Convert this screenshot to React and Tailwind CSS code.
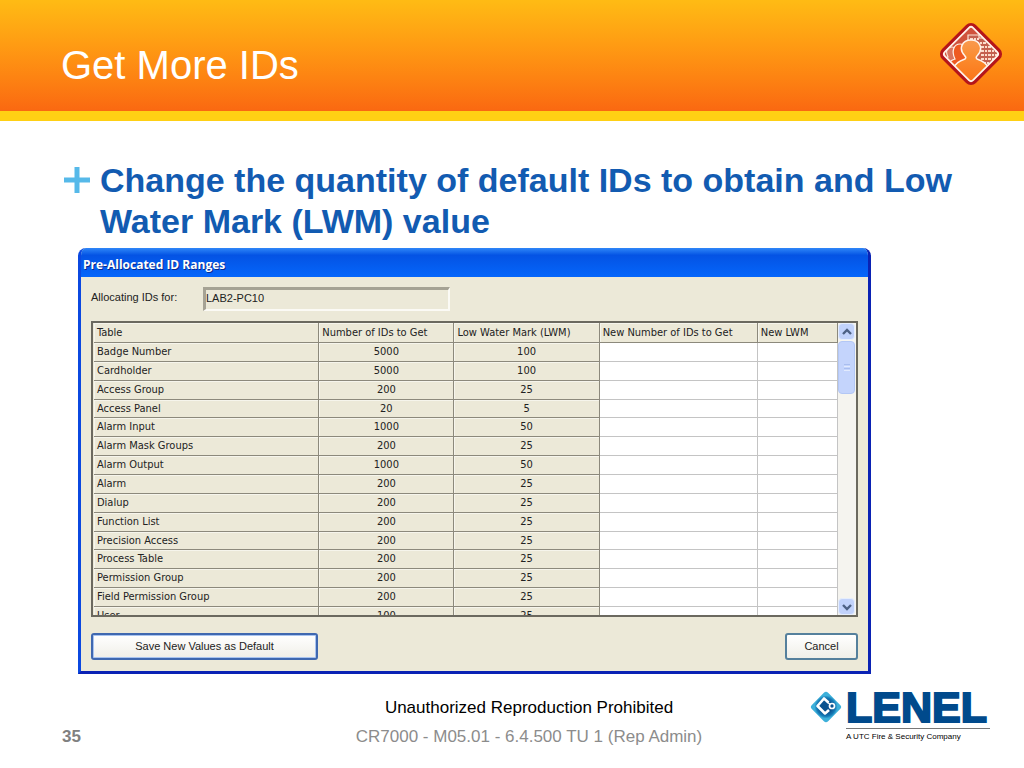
const columns = [
  { label: "Table", width: "w-[225px]" },
  { label: "Number of IDs to Get", width: "w-[135px]" },
  { label: "Low Water Mark (LWM)", width: "w-[145px]" },
  { label: "New Number of IDs to Get", width: "w-[158px]" },
  { label: "New LWM", width: "w-[80px]" },
];

const rows = [
  ["Badge Number", 5000, 100],
  ["Cardholder", 5000, 100],
  ["Access Group", 200, 25],
  ["Access Panel", 20, 5],
  ["Alarm Input", 1000, 50],
  ["Alarm Mask Groups", 200, 25],
  ["Alarm Output", 1000, 50],
  ["Alarm", 200, 25],
  ["Dialup", 200, 25],
  ["Function List", 200, 25],
  ["Precision Access", 200, 25],
  ["Process Table", 200, 25],
  ["Permission Group", 200, 25],
  ["Field Permission Group", 200, 25],
  ["User", 100, 25],
];

function BadgeIcon() {
  return (
    <svg viewBox="0 0 64 64" className="h-16 w-16" aria-hidden="true">
      <defs>
        <clipPath id="badge-clip">
          <rect x="12" y="12" width="40" height="40" rx="3" transform="rotate(45 32 32)" />
        </clipPath>
        <linearGradient id="badge-person" x1="0" y1="0" x2="0" y2="1">
          <stop offset="0" stopColor="#f99a50" />
          <stop offset="0.4" stopColor="#fb8a2c" />
          <stop offset="1" stopColor="#fb6d12" />
        </linearGradient>
      </defs>
      <rect x="8" y="8" width="48" height="48" rx="7" transform="rotate(45 32 32)" fill="#b5151a" />
      <g clipPath="url(#badge-clip)">
        <rect width="64" height="64" fill="#d0523c" />
        <path d="M29 36V13h11v3h8v4h16v44H29z" fill="#c4604f" stroke="#fbe3d4" strokeWidth="1.2" />
        <path
          d="M31 17h9M37 21h11M42 25h11M42 29h15M42 33h17M42 37h14M44 41h10M46 45h7"
          stroke="#fbdccb"
          strokeWidth="2"
          strokeDasharray="3 1 2 1"
        />
        <path
          d="M2 42c1-5 4-6 7-7-3-6-1-10 4-10 4 0 5 4 4 8l4 6v9H2z"
          fill="#d97560"
          stroke="#fbe3d4"
          strokeWidth="1.2"
        />
        <path
          d="M8 46c1-6 4-8 8-9-4-8-1-15 5-15 5 0 7 5 5 12l6 5v12H8z"
          fill="#ee5a22"
          stroke="#fff3ea"
          strokeWidth="1.2"
        />
        <path
          d="M15 46c1-5 5-7 11-9 1-1 1-2 0-3-7-7-3-16 6-16s13 9 6 16c-1 1-1 2 0 3 6 2 10 4 11 9v20H15z"
          fill="url(#badge-person)"
          stroke="#fff3ea"
          strokeWidth="1.5"
        />
      </g>
      <rect
        x="12"
        y="12"
        width="40"
        height="40"
        rx="3"
        transform="rotate(45 32 32)"
        fill="none"
        stroke="#fff3ea"
        strokeWidth="1.8"
      />
    </svg>
  );
}

function LenelMark() {
  return (
    <svg viewBox="0 0 32 34" className="h-[34px] w-8 shrink-0" aria-hidden="true">
      <defs>
        <radialGradient id="lenel-mark">
          <stop offset="0.5" stopColor="#0a528f" />
          <stop offset="0.8" stopColor="#1478b4" />
          <stop offset="1" stopColor="#3db0da" />
        </radialGradient>
      </defs>
      <rect x="4.5" y="5.5" width="23" height="23" rx="3" transform="rotate(45 16 17)" fill="url(#lenel-mark)" />
      <path
        d="M18.5 12.5L14 8.5L7.5 16L15 23.5L19 20"
        fill="none"
        stroke="#fff"
        strokeWidth="2.6"
        strokeLinejoin="round"
      />
      <path d="M17 12l4 3" stroke="#fff" strokeWidth="1.5" />
      <circle cx="22" cy="16" r="2.5" fill="#0a528f" stroke="#fff" strokeWidth="1.7" />
    </svg>
  );
}

function ScrollButton({ label, path }) {
  return (
    <button
      type="button"
      aria-label={label}
      className="flex h-[17px] w-full items-center justify-center rounded-sm border border-[#e6eefc] bg-[#c1d2fb]"
    >
      <svg viewBox="0 0 10 8" className="h-2 w-2.5">
        <path d={path} fill="none" stroke="#4d6185" strokeWidth="2.4" />
      </svg>
    </button>
  );
}

function ScrollBar() {
  return (
    <div className="flex w-[18px] shrink-0 flex-col bg-[#f5f4ef] pr-px">
      <ScrollButton label="Scroll up" path="M1 6l4-4 4 4" />
      <div className="mt-px flex h-[53px] flex-col items-center justify-center gap-px rounded-sm border border-[#b3c7f5] bg-[#c4d4fc]">
        <span className="h-px w-1.5 bg-[#a9beef]" />
        <span className="h-px w-1.5 bg-[#e2eafd]" />
        <span className="h-px w-1.5 bg-[#a9beef]" />
        <span className="h-px w-1.5 bg-[#e2eafd]" />
      </div>
      <div className="flex-1" />
      <ScrollButton label="Scroll down" path="M1 2l4 4 4-4" />
    </div>
  );
}

function IdTable() {
  const grey = "border-r border-b border-[#8c897c] p-0 shadow-[inset_1px_1px_0_#f6f5ec]";
  const white = "border-r border-b border-[#c4c4c4] bg-white p-0";

  return (
    <div className="mt-2.5 flex h-[296px] border-2 border-[#6b695f] pl-px">
      <div className="min-w-0 flex-1 overflow-hidden">
        <table className="h-[303px] w-full table-fixed border-separate border-spacing-0 text-[11px] leading-4 text-[#222]">
          <thead>
            <tr className="h-5">
              {columns.map((col) => (
                <th key={col.label} className={`${grey} ${col.width} h-5 pl-[3px] text-left font-normal whitespace-nowrap`}>
                  {col.label}
                </th>
              ))}
            </tr>
          </thead>
          <tbody>
            {rows.map(([name, ids, lwm]) => (
              <tr key={name}>
                <td className={`${grey} pl-[3px]`}>{name}</td>
                <td className={`${grey} text-center`}>{ids}</td>
                <td className={`${grey} text-center`}>{lwm}</td>
                <td className={white} />
                <td className={white} />
              </tr>
            ))}
          </tbody>
        </table>
      </div>
      <ScrollBar />
    </div>
  );
}

function RangesDialog() {
  return (
    <section className="mt-1.5 mr-[153px] ml-[78px] overflow-hidden rounded-t-lg border-r-[3px] border-b-[3px] border-l-[3px] border-[#0a22b4] border-l-[#0b48e0] bg-[#ece9d8] font-['DejaVu_Sans_Condensed','DejaVu_Sans',sans-serif] text-[11px] text-[#222]">
      <h3 className="flex h-[29px] items-center bg-linear-to-b from-[#2f86f8] via-[#0453e4] via-25% to-[#0566fb] pt-1 pl-0.5 font-['Open_Sans',sans-serif] text-xs font-bold text-white [text-shadow:1px_1px_0_#0a2a8c]">
        Pre-Allocated ID Ranges
      </h3>
      <div className="px-2.5 pt-2.5 pb-[11px]">
        <div className="flex items-center font-['Liberation_Sans',sans-serif]">
          <label htmlFor="workstation" className="w-28 pb-1">
            Allocating IDs for:
          </label>
          <input
            id="workstation"
            readOnly
            value="LAB2-PC10"
            className="h-6 w-[247px] border-t-[3px] border-r-2 border-b-2 border-l-[3px] border-[#fbfaf5] border-t-[#a5a294] border-l-[#a5a294] bg-[#ece9d8] pb-1 outline-none"
          />
        </div>
        <IdTable />
        <div className="mt-4 flex justify-between font-['Liberation_Sans',sans-serif]">
          <button
            type="button"
            className="h-[27px] w-[227px] rounded-[3px] border-2 border-[#3f68b0] bg-linear-to-b from-white to-[#f0efe8] shadow-[inset_0_0_0_1px_#a9c4f0]"
          >
            Save New Values as Default
          </button>
          <button
            type="button"
            className="h-[27px] w-[73px] rounded-[3px] border-2 border-[#55809c] bg-linear-to-b from-white to-[#f0efe8]"
          >
            Cancel
          </button>
        </div>
      </div>
    </section>
  );
}

function Footer() {
  return (
    <footer className="grid grid-cols-[1fr_auto_1fr] pt-4 pr-7 pl-[62px] text-[17px] leading-[29px]">
      <span className="self-end font-bold text-[#808080]">35</span>
      <div className="pt-[3px] text-center">
        <p className="text-black">Unauthorized Reproduction Prohibited</p>
        <p className="text-[#8c8c8c]">CR7000 - M05.01 - 6.4.500 TU 1 (Rep Admin)</p>
      </div>
      <div className="mr-1.5 flex items-start justify-end gap-1">
        <LenelMark />
        <div className="w-36">
          <p className="text-[43px] leading-[34px] font-bold text-[#004a8c] [-webkit-text-stroke:2px_#004a8c]">LENEL</p>
          <p className="mt-1 border-t border-[#777] pt-0.5 text-[8px] leading-3 whitespace-nowrap text-black">
            A UTC Fire &amp; Security Company
          </p>
        </div>
      </div>
    </footer>
  );
}

export default function App() {
  return (
    <div className="min-h-screen w-full bg-white font-['Liberation_Sans',Arial,sans-serif]">
      <header className="flex h-[121px] justify-between border-b-[10px] border-[#ffd014] bg-linear-to-b from-[#ffbb14] to-[#fa6811] pr-[21px] pl-[61px]">
        <h1 className="pt-10 text-[40px] leading-[50px] text-white">Get More IDs</h1>
        <div className="pt-[22px]">
          <BadgeIcon />
        </div>
      </header>

      <main>
        <div className="flex gap-2.5 pt-[39px] pr-10 pl-16">
          <svg viewBox="0 0 26 26" className="mt-[7px] h-[26px] w-[26px] shrink-0" aria-hidden="true">
            <path d="M13 0v26M0 13h26" stroke="#56b9e9" strokeWidth="5" />
          </svg>
          <h2 className="text-[34px] leading-[41px] font-bold text-[#125bb1]">
            Change the quantity of default IDs to obtain and Low Water Mark (LWM) value
          </h2>
        </div>
        <RangesDialog />
      </main>

      <Footer />
    </div>
  );
}
